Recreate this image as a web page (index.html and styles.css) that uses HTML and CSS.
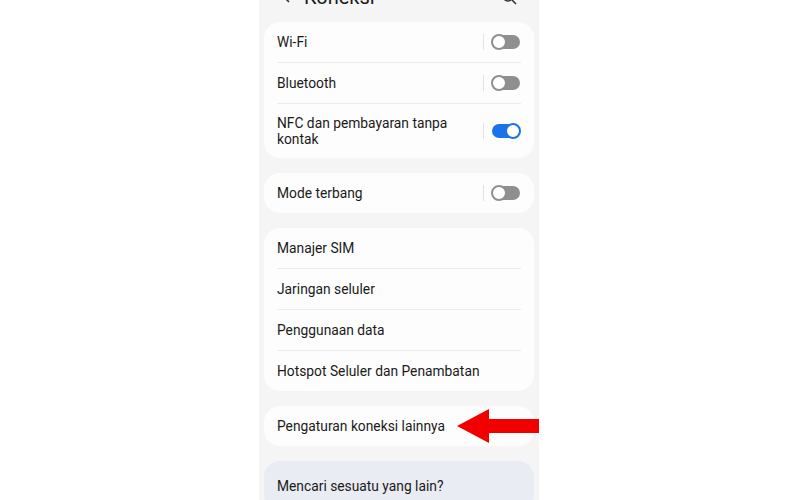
FILE: index.html
```html
<!DOCTYPE html>
<html lang="id">
<head>
    <meta charset="UTF-8">
    <title>Koneksi</title>
    <link rel="stylesheet" href="styles.css">
</head>
<body>
    <div class="layar">
        <div class="header">
            <div class="judul">
                <svg class="kembali" width="14" height="14" viewBox="0 0 14 14"><path d="M9 2 L4 7 L9 12" fill="none" stroke="#333" stroke-width="1.6"/></svg>
                <span>Koneksi</span>
            </div>
            <svg width="16" height="16" viewBox="0 0 16 16"><circle cx="7" cy="7" r="5" fill="none" stroke="#333" stroke-width="1.6"/><path d="M11 11 L15 15" stroke="#333" stroke-width="1.6"/></svg>
        </div>

        <div class="kartu">
            <div class="baris">
                <span>Wi-Fi</span>
                <div class="saklar"><i class="garis"></i><i class="toggle"></i></div>
            </div>
            <div class="baris">
                <span>Bluetooth</span>
                <div class="saklar"><i class="garis"></i><i class="toggle"></i></div>
            </div>
            <div class="baris tinggi">
                <span>NFC dan pembayaran tanpa<br>kontak</span>
                <div class="saklar"><i class="garis"></i><i class="toggle nyala"></i></div>
            </div>
        </div>

        <div class="kartu">
            <div class="baris">
                <span>Mode terbang</span>
                <div class="saklar"><i class="garis"></i><i class="toggle"></i></div>
            </div>
        </div>

        <div class="kartu">
            <div class="baris"><span>Manajer SIM</span></div>
            <div class="baris"><span>Jaringan seluler</span></div>
            <div class="baris"><span>Penggunaan data</span></div>
            <div class="baris"><span>Hotspot Seluler dan Penambatan</span></div>
        </div>

        <div class="kartu">
            <div class="baris"><span>Pengaturan koneksi lainnya</span></div>
        </div>

        <div class="kartu biru">
            <div class="baris"><span>Mencari sesuatu yang lain?</span></div>
        </div>

        <svg class="panah" width="84" height="34" viewBox="0 0 84 34"><polygon points="0,17 32,0 32,10 84,10 84,24 32,24 32,34" fill="#f20000"/></svg>
    </div>
</body>
</html>
```

FILE: styles.css
```css
body {
    margin: 0;
    height: 500px;
    background-color: #ffffff;
    display: flex;
    justify-content: center;
    overflow: hidden;
    font-family: Roboto, "Noto Sans", sans-serif;
    color: #1a1a1a;
}

.layar {
    position: relative;
    width: 280px;
    margin-left: -2px;
    height: 500px;
    background-color: #f5f5f5;
    display: flex;
    flex-direction: column;
    gap: 15px;
    padding: 0 5px;
    box-sizing: border-box;
    overflow: hidden;
}

.header {
    margin-top: -14px;
    height: 21px;
    display: flex;
    justify-content: space-between;
    align-items: center;
    padding: 0 17px 0 16px;
    font-size: 20px;
}

.judul {
    display: flex;
    align-items: center;
    gap: 10px;
}

.kartu {
    background-color: #fdfdfd;
    border-radius: 16px;
    padding: 0 13px;
}

.kartu.biru {
    background-color: #e9ecf2;
}

.baris {
    height: 40px;
    display: flex;
    align-items: center;
    justify-content: space-between;
    font-size: 13.8px;
    line-height: 16px;
    border-bottom: 1px solid #ececec;
    padding: 0 1px 0 0;
}

.baris:last-child {
    border-bottom: none;
}

.baris.tinggi {
    height: 54px;
}

.biru .baris {
    height: 50px;
}

.saklar {
    display: flex;
    align-items: center;
    gap: 8px;
}

.garis {
    width: 1px;
    height: 16px;
    background-color: #e2e2e2;
}

.toggle {
    position: relative;
    width: 28px;
    height: 14px;
    border-radius: 7px;
    background-color: #8f8f8f;
}

.toggle::after {
    content: "";
    position: absolute;
    left: -1px;
    top: -1px;
    width: 12px;
    height: 12px;
    border-radius: 50%;
    background-color: #fff;
    border: 2px solid #8f8f8f;
}

.toggle.nyala {
    background-color: #1a73e8;
}

.toggle.nyala::after {
    left: auto;
    right: -1px;
    border-color: #1a73e8;
}

.panah {
    position: absolute;
    left: 198px;
    top: 409px;
}
```
